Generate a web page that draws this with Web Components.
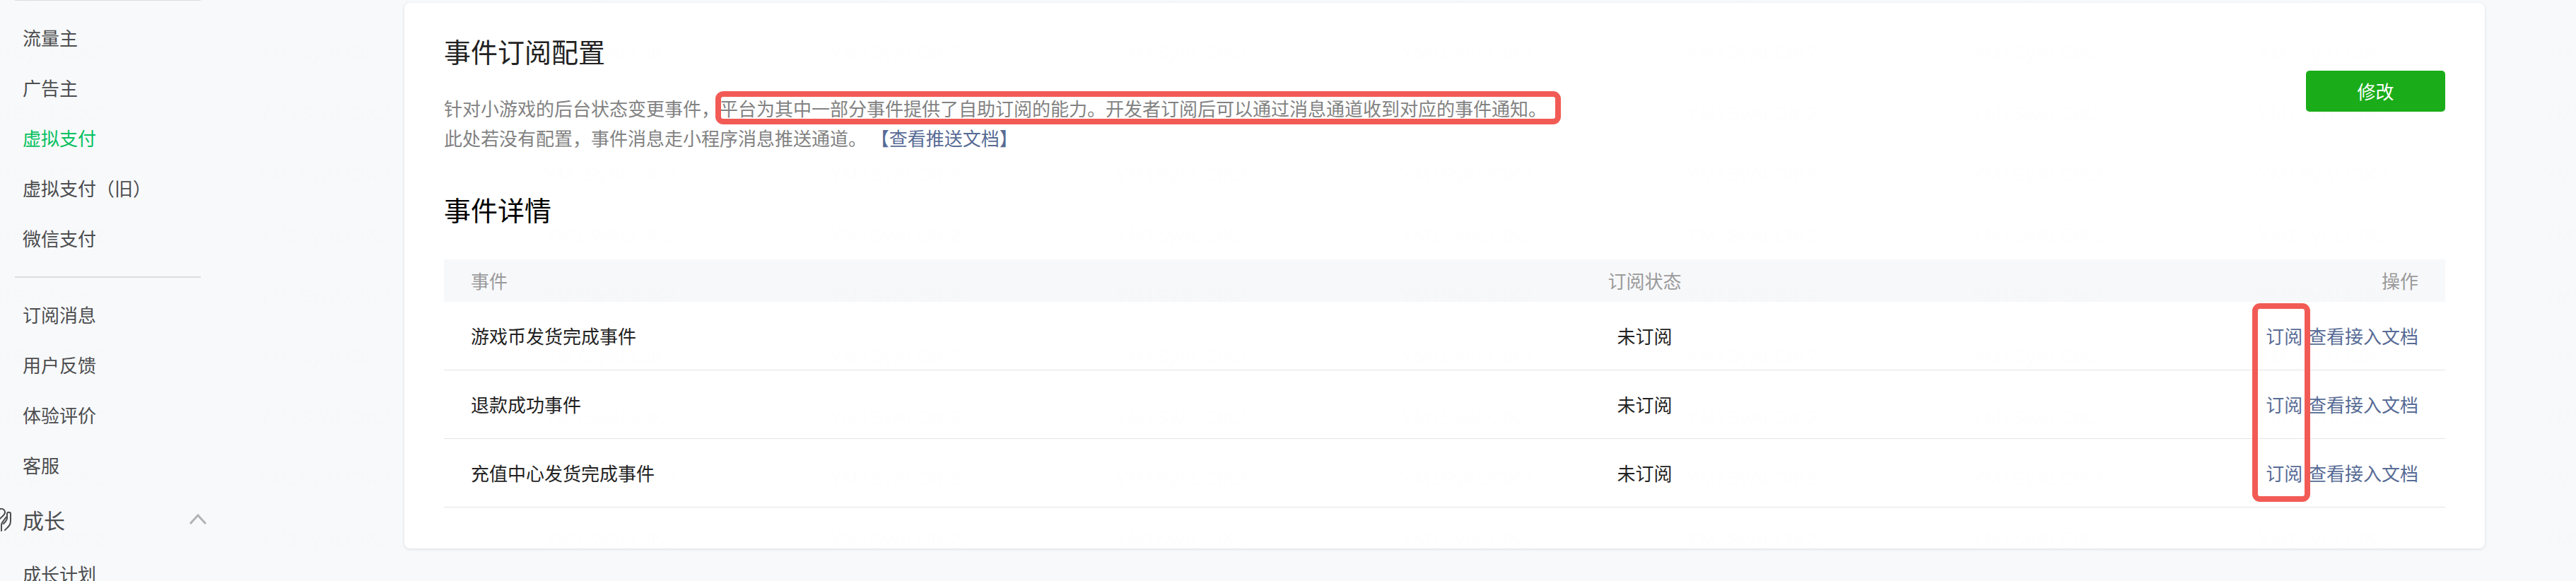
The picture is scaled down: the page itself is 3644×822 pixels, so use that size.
<!DOCTYPE html>
<html lang="zh-CN">
<head>
<meta charset="utf-8">
<title>事件订阅配置</title>
<style>
  body {
    margin: 0;
    background: #f8f9fb;
    color: #222;
    font: 26px/42px "Noto Sans CJK SC", sans-serif;
    text-spacing-trim: space-all;
  }
</style>
</head>
<body>
<admin-shell>
  <side-nav slot="nav">
    <nav-group>
      <nav-item>流量主</nav-item>
      <nav-item>广告主</nav-item>
      <nav-item active>虚拟支付</nav-item>
      <nav-item>虚拟支付（旧）</nav-item>
      <nav-item>微信支付</nav-item>
    </nav-group>
    <nav-group>
      <nav-item>订阅消息</nav-item>
      <nav-item>用户反馈</nav-item>
      <nav-item>体验评价</nav-item>
      <nav-item>客服</nav-item>
    </nav-group>
    <nav-section label="成长">
      <nav-item>成长计划</nav-item>
    </nav-section>
  </side-nav>
  <config-card heading="事件订阅配置">
    <span slot="desc">针对小游戏的后台状态变更事件，<mark-box>平台为其中一部分事件提供了自助订阅的能力。开发者订阅后可以通过消息通道收到对应的事件通知。</mark-box><br>此处若没有配置，事件消息走小程序消息推送通道。<text-link>【查看推送文档】</text-link></span>
    <primary-button slot="action">修改</primary-button>
    <event-table></event-table>
  </config-card>
</admin-shell>

<script>
function define(name, html, setup) {
  const template = document.createElement('template');
  template.innerHTML = html;

  customElements.define(name, class extends HTMLElement {
    constructor() {
      super();
      this.attachShadow({ mode: 'open' });
      this.shadowRoot.appendChild(template.content.cloneNode(true));
    }

    connectedCallback() {
      if (setup) setup(this, this.shadowRoot);
    }
  });
}

define('admin-shell', `
  <style>
    :host {
      position: relative;
      display: flex;
      align-items: flex-start;
      height: 100vh;
      overflow: hidden;
    }
    main {
      flex: 1;
      min-width: 0;
      padding: 4px 129px 46px 0;
    }
    .watermark {
      position: absolute;
      inset: 0;
      width: 100%;
      height: 100%;
      pointer-events: none;
    }
    .watermark text {
      font: 28px "Liberation Sans", sans-serif;
      fill: rgba(0, 0, 0, 0.005);
    }
  </style>
  <slot name="nav"></slot>
  <main><slot></slot></main>
  <svg class="watermark" aria-hidden="true">
    <defs>
      <pattern id="mark" x="365" y="30" width="404" height="86" patternUnits="userSpaceOnUse">
        <text x="0" y="54">YM1SyALCtK2</text>
      </pattern>
    </defs>
    <rect width="100%" height="100%" fill="url(#mark)"/>
  </svg>
`);

define('side-nav', `
  <style>
    :host {
      flex: none;
      width: 572px;
      margin-top: -1px;
    }
  </style>
  <nav><slot></slot></nav>
`);

define('nav-group', `
  <style>
    :host {
      display: block;
      width: 263px;
      margin-left: 21px;
      padding: 16px 0 19px;
      border-top: 2px solid #dcdde0;
      box-sizing: border-box;
    }
    div { margin-left: -21px; }
  </style>
  <div><slot></slot></div>
`);

define('nav-item', `
  <style>
    :host { display: block; }
    a {
      display: block;
      padding-left: 32px;
      line-height: 71px;
      color: #4c4d4f;
      text-decoration: none;
    }
    :host([active]) a { color: #07c160; }
  </style>
  <a href="#"><slot></slot></a>
`, (host, root) => {
  if (host.hasAttribute('active')) root.querySelector('a').setAttribute('aria-current', 'page');
});

define('nav-section', `
  <style>
    :host { display: block; }
    button {
      display: flex;
      align-items: center;
      gap: 15px;
      width: 293px;
      height: 46px;
      padding: 0;
      border: 0;
      background: none;
      color: #4c4d4f;
      font: inherit;
      font-size: 30px;
    }
    svg {
      flex: none;
      fill: none;
    }
    .icon {
      stroke: #4c4d4f;
      stroke-width: 2;
      stroke-linecap: round;
      stroke-linejoin: round;
    }
    .arrow {
      margin-left: auto;
      stroke: #b2b3b5;
      stroke-width: 3;
    }
    .items { padding-top: 18px; }
  </style>
  <button type="button" aria-expanded="true">
    <svg class="icon" width="17" height="36" viewBox="0 0 17 36">
      <path d="M-2 5C1 1 7 3 7 8C7 12 3 13 0 17"/>
      <path d="M2 34V26C2 22 5 20 7 17C8 15 10 13 10 16C10 19 8 21 5 24"/>
      <path d="M10 16V10C10 7 15 7 15 10V20C15 26 12 28 7 33"/>
    </svg>
    <span></span>
    <svg class="arrow" width="26" height="16" viewBox="0 0 26 16"><path d="M2 14L13 2L24 14"/></svg>
  </button>
  <div class="items"><slot></slot></div>
`, (host, root) => {
  root.querySelector('span').textContent = host.getAttribute('label');
});

define('config-card', `
  <style>
    :host {
      display: block;
      padding: 44px 56px 58px;
      border-radius: 8px;
      background: #fff;
      box-shadow: 0 1px 4px rgba(0, 0, 0, 0.12);
    }
    header {
      display: flex;
      align-items: flex-start;
      justify-content: space-between;
    }
    h1 {
      margin: 0 0 36px;
      font-size: 38px;
      font-weight: 400;
      line-height: 48px;
    }
    p {
      margin: 0;
      color: #828282;
    }
    .action { padding-top: 52px; }
  </style>
  <header>
    <div>
      <h1></h1>
      <p><slot name="desc"></slot></p>
    </div>
    <div class="action"><slot name="action"></slot></div>
  </header>
  <slot></slot>
`, (host, root) => {
  root.querySelector('h1').textContent = host.getAttribute('heading');
});

define('mark-box', `
  <style>
    :host {
      position: relative;
      display: inline-block;
    }
    :host::after {
      content: "";
      position: absolute;
      inset: -3px -20px -2px -6px;
      border: 8px solid #f25b55;
      border-radius: 11px;
      pointer-events: none;
    }
  </style>
  <slot></slot>
`);

define('text-link', `
  <style>
    :host { display: inline; }
    a {
      color: #576b95;
      text-decoration: none;
    }
  </style>
  <a href="#"><slot></slot></a>
`);

define('primary-button', `
  <style>
    :host { display: block; }
    button {
      display: block;
      width: 197px;
      height: 58px;
      padding: 0;
      border: 0;
      border-radius: 5px;
      background: #1aad19;
      color: #fff;
      font: inherit;
    }
  </style>
  <button type="button"><slot></slot></button>
`);

const EVENTS = ['游戏币发货完成事件', '退款成功事件', '充值中心发货完成事件'];

define('event-table', `
  <style>
    :host { display: block; }
    h2 {
      margin: 56px 0 47px;
      color: #000;
      font-size: 38px;
      font-weight: 400;
      line-height: 48px;
    }
    .wrap { position: relative; }
    table {
      width: 100%;
      border-collapse: separate;
      border-spacing: 0;
      table-layout: fixed;
    }
    th, td {
      box-sizing: border-box;
      padding: 0 38px;
      text-align: left;
    }
    th {
      width: 40%;
      height: 60px;
      background: #f7f8fa;
      color: #9a9a9a;
      font-weight: 400;
    }
    td {
      height: 97px;
      border-bottom: 1px solid #e4e5e7;
    }
    th:nth-child(2), td:nth-child(2) { text-align: center; }
    th:last-child, td:last-child {
      width: 20%;
      text-align: right;
    }
    text-link + text-link { margin-left: 2px; }
    .frame {
      position: absolute;
      inset: 62px 191px 8px auto;
      box-sizing: border-box;
      width: 82px;
      border: 8px solid #f25b55;
      border-radius: 11px;
      pointer-events: none;
    }
  </style>
  <h2>事件详情</h2>
  <div class="wrap">
    <table>
      <thead>
        <tr><th scope="col">事件</th><th scope="col">订阅状态</th><th scope="col">操作</th></tr>
      </thead>
      <tbody></tbody>
    </table>
    <div class="frame"></div>
  </div>
`, (host, root) => {
  root.querySelector('tbody').innerHTML = EVENTS.map(name => `
    <tr>
      <td>${name}</td>
      <td>未订阅</td>
      <td><text-link>订阅</text-link> <text-link>查看接入文档</text-link></td>
    </tr>`).join('');
});
</script>
</body>
</html>
